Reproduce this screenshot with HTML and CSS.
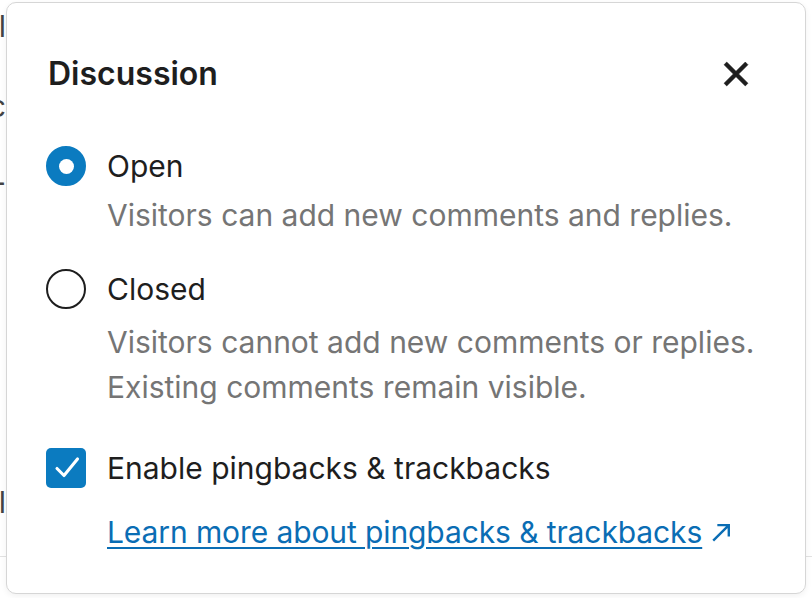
FILE: index.html
```html
<!DOCTYPE html>
<html lang="en">
<head>
  <meta charset="UTF-8">
  <meta name="viewport" content="width=device-width, initial-scale=1">
  <title>Discussion</title>
  <link rel="stylesheet" href="styles.css">
</head>
<body>
  <div class="page">
    <div class="edge">
      <span class="frag frag-1">ul</span>
      <span class="frag frag-2">ic</span>
      <span class="frag frag-3">-</span>
      <span class="frag frag-4">l</span>
    </div>
    <div class="rule"></div>

    <div class="popover">
      <div class="header">
        <h2>Discussion</h2>
        <button class="close" aria-label="Close">
          <svg viewBox="0 0 24 24" width="60" height="60"><path d="M12 13.06l3.712 3.713 1.061-1.06L13.061 12l3.712-3.712-1.06-1.06L12 10.938 8.288 7.227l-1.061 1.06L10.939 12l-3.712 3.712 1.06 1.061L12 13.061z"/></svg>
        </button>
      </div>

      <div class="option option-open">
        <span class="radio checked"></span>
        <span class="label">Open</span>
      </div>
      <p class="desc desc-open">Visitors can add new comments and replies.</p>

      <div class="option option-closed">
        <span class="radio"></span>
        <span class="label">Closed</span>
      </div>
      <p class="desc desc-closed">Visitors cannot add new comments or replies.<br>Existing comments remain visible.</p>

      <div class="option option-ping">
        <span class="checkbox">
          <svg viewBox="0 0 40 40" width="40" height="40"><path d="M11 20.5l7 7L31.5 11"/></svg>
        </span>
        <span class="label">Enable pingbacks &amp; trackbacks</span>
      </div>
      <p class="more">
        <a href="#">Learn more about pingbacks &amp; trackbacks</a>
        <svg class="ext" viewBox="0 0 24 24" width="22" height="22"><path d="M3.5 21.5L20 5M8 4.5h12.5V17"/></svg>
      </p>
    </div>
  </div>
</body>
</html>
```

FILE: styles.css
```css
body {
  margin: 0;
  background: #fff;
  font-family: Inter, "Liberation Sans", sans-serif;
}
.page {
  position: relative;
  width: 812px;
  height: 598px;
  overflow: hidden;
}
.edge {
  width: 6px;
  overflow: hidden;
  display: flex;
  flex-direction: column;
  align-items: flex-end;
  color: #444;
  font-size: 30px;
  line-height: 40px;
}
.frag {
  white-space: nowrap;
}
.frag-1 { margin-top: 6px; }
.frag-2 { margin-top: 40px; }
.frag-3 { margin-top: 36px; }
.frag-4 { margin-top: 280px; }
.rule {
  position: absolute;
  left: 0;
  right: 0;
  top: 556px;
  border-top: 1px solid #e2e2e2;
}
.popover {
  position: absolute;
  left: 6px;
  top: 2px;
  width: 800px;
  height: 592px;
  box-sizing: border-box;
  background: #fff;
  border: 1.5px solid #d6d6d6;
  border-radius: 10px;
  box-shadow: 0 2px 6px rgba(0, 0, 0, 0.06);
  padding: 51px 39px 0 41px;
  color: #1e1e1e;
}
.header {
  display: flex;
  align-items: center;
  justify-content: space-between;
  height: 40px;
}
h2 {
  margin: 0;
  font-size: 32px;
  line-height: 40px;
  font-weight: 600;
}
.close {
  border: 0;
  background: none;
  padding: 0;
  width: 60px;
  height: 60px;
  display: flex;
}
.close svg {
  fill: #1e1e1e;
  stroke: #1e1e1e;
  stroke-width: 0.25;
}
.option {
  display: flex;
  align-items: center;
  gap: 21px;
  height: 40px;
  margin-left: -2px;
}
.option-open { margin-top: 52px; }
.option-closed { margin-top: 31px; }
.option-ping { margin-top: 38px; }
.label {
  font-size: 30px;
  line-height: 40px;
  color: #1e1e1e;
}
.radio {
  width: 40px;
  height: 40px;
  box-sizing: border-box;
  border-radius: 50%;
  border: 2px solid #1e1e1e;
  background: #fff;
  display: flex;
  align-items: center;
  justify-content: center;
}
.radio.checked {
  border-color: #0b7bc0;
  background: #0b7bc0;
}
.radio.checked::before {
  content: "";
  width: 15px;
  height: 15px;
  border-radius: 50%;
  background: #fff;
}
.checkbox {
  width: 40px;
  height: 40px;
  border-radius: 5px;
  background: #0b7bc0;
  display: flex;
}
.checkbox svg {
  fill: none;
  stroke: #fff;
  stroke-width: 3.1;
  stroke-linecap: round;
  stroke-linejoin: round;
}
.desc {
  margin: 7px 0 0 59px;
  font-size: 30px;
  line-height: 45px;
  color: #757575;
}
.desc-closed { margin-top: 11px; }
.more {
  margin: 23px 0 0 59px;
  font-size: 30px;
  line-height: 42px;
  display: flex;
  align-items: center;
  gap: 8px;
}
.more a {
  color: #0a6db4;
  letter-spacing: -0.1px;
  text-decoration: underline;
  text-decoration-thickness: 2px;
  text-underline-offset: 4px;
}
.ext {
  fill: none;
  stroke: #0a6db4;
  stroke-width: 2.6;
}
```
